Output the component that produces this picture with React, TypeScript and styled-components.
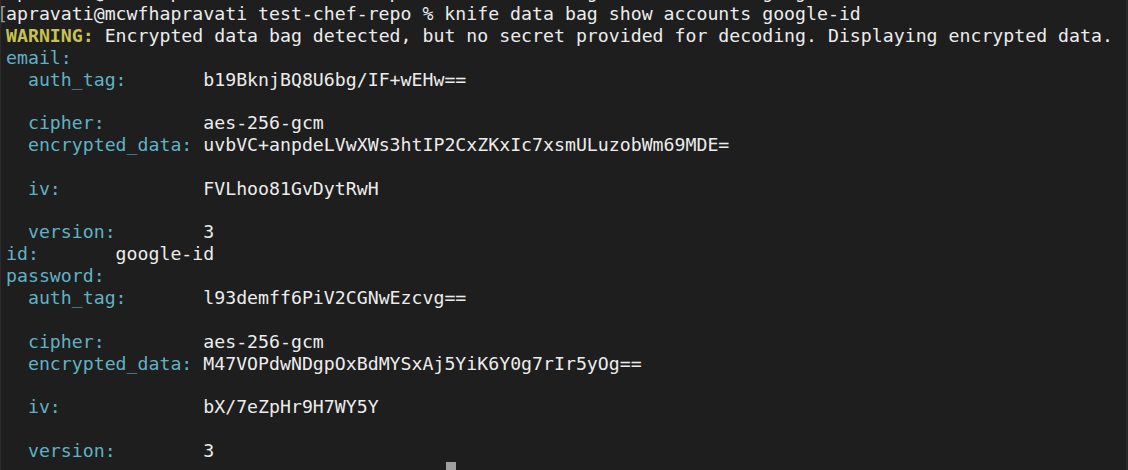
import { ReactElement } from "react";
import styled, { createGlobalStyle } from "styled-components";

const GlobalStyle = createGlobalStyle`
  html, body {
    margin: 0;
    padding: 0;
    background: #1e1e1e;
  }
`;

const Window = styled.div`
  position: relative;
  width: 1128px;
  height: 470px;
  overflow: hidden;
  box-sizing: border-box;
  background-color: #1e1e1e;
  border-left: 1px solid #2c2c2c;
  border-right: 2px solid #2a2a2a;
`;

const Screen = styled.div`
  display: flex;
  flex-direction: column;
  margin-top: -18.85px;
  padding-left: 5px;
  font-family: "DejaVu Sans Mono", "Liberation Mono", monospace;
  font-size: 18.22px;
  line-height: 21.85px;
  color: #ececec;
  white-space: pre;
`;

const Line = styled.div`
  height: 21.85px;
`;

const Key = styled.span`
  color: #60b2c3;
`;

const Warn = styled.span`
  color: #c6c351;
  font-weight: bold;
`;

const Mark = styled.span`
  position: absolute;
  left: -4px;
  top: 3px;
  font-family: "DejaVu Sans Mono", monospace;
  font-size: 18.22px;
  line-height: 21.85px;
  color: #9a9a9a;
`;

const Cursor = styled.span`
  position: absolute;
  left: 445px;
  top: 462px;
  width: 10px;
  height: 12px;
  background-color: #a0a0a0;
`;

type Field = { key: string; value: string };

const email: Field[] = [
  { key: "auth_tag", value: "b19BknjBQ8U6bg/IF+wEHw==" },
  { key: "", value: "" },
  { key: "cipher", value: "aes-256-gcm" },
  { key: "encrypted_data", value: "uvbVC+anpdeLVwXWs3htIP2CxZKxIc7xsmULuzobWm69MDE=" },
  { key: "", value: "" },
  { key: "iv", value: "FVLhoo81GvDytRwH" },
  { key: "", value: "" },
  { key: "version", value: "3" },
];

const password: Field[] = [
  { key: "auth_tag", value: "l93demff6PiV2CGNwEzcvg==" },
  { key: "", value: "" },
  { key: "cipher", value: "aes-256-gcm" },
  { key: "encrypted_data", value: "M47VOPdwNDgpOxBdMYSxAj5YiK6Y0g7rIr5yOg==" },
  { key: "", value: "" },
  { key: "iv", value: "bX/7eZpHr9H7WY5Y" },
  { key: "", value: "" },
  { key: "version", value: "3" },
];

const pad = (s: string, n: number) => s + " ".repeat(Math.max(0, n - s.length));

const Nested = ({ fields }: { fields: Field[] }) => (
  <>
    {fields.map((f, i) =>
      f.key ? (
        <Line key={i}>
          {"  "}
          <Key>{pad(f.key + ":", 16)}</Key>
          {f.value}
        </Line>
      ) : (
        <Line key={i}> </Line>
      )
    )}
  </>
);

export default function App(): ReactElement {
  return (
    <>
      <GlobalStyle />
      <Window>
        <Screen>
          <Line>apravati@mcwfhapravati test-chef-repo % knife data bag show accounts google-id --secret-file</Line>
          <Line>apravati@mcwfhapravati test-chef-repo % knife data bag show accounts google-id</Line>
          <Line>
            <Warn>WARNING:</Warn> Encrypted data bag detected, but no secret provided for decoding. Displaying encrypted data.
          </Line>
          <Line>
            <Key>email:</Key>
          </Line>
          <Nested fields={email} />
          <Line>
            <Key>{pad("id:", 10)}</Key>
            google-id
          </Line>
          <Line>
            <Key>password:</Key>
          </Line>
          <Nested fields={password} />
        </Screen>
        <Mark>[</Mark>
        <Cursor />
      </Window>
    </>
  );
}
